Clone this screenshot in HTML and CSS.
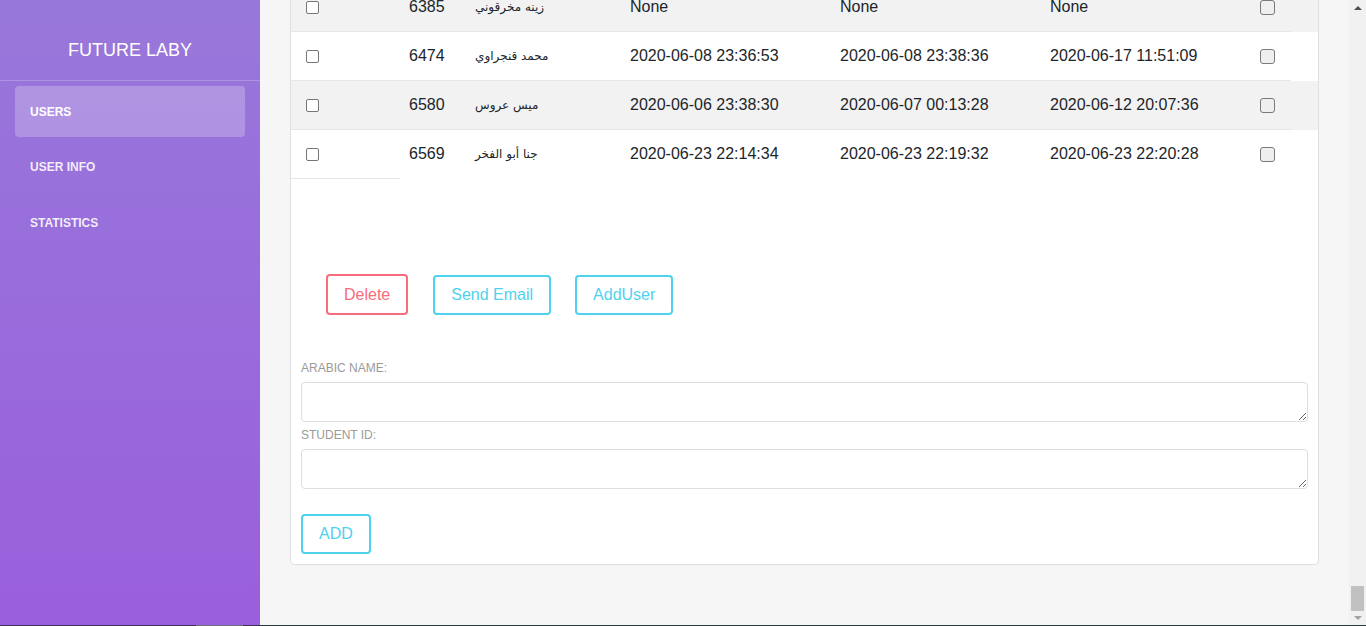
FILE: index.html
```html
<!DOCTYPE html>
<html lang="en">
<head>
<meta charset="utf-8">
<title>Future Laby - Users</title>
<link rel="stylesheet" href="styles.css">
</head>
<body>
<div class="app">
  <aside class="sidebar">
    <div class="brand">FUTURE LABY</div>
    <nav class="nav">
      <a class="nav-item active">USERS</a>
      <a class="nav-item">USER INFO</a>
      <a class="nav-item">STATISTICS</a>
    </nav>
  </aside>
  <main class="main">
    <section class="card">
      <table class="users">
        <colgroup>
          <col class="c-sel"><col class="c-id"><col class="c-name"><col class="c-date"><col class="c-date"><col class="c-date"><col class="c-chk"><col class="c-pad">
        </colgroup>
        <tbody>
          <tr>
            <td class="sel"><span class="box"></span></td>
            <td>6385</td>
            <td class="ar">زينه مخرقوني</td>
            <td>None</td>
            <td>None</td>
            <td>None</td>
            <td><span class="box alt"></span></td>
            <td class="pad"></td>
          </tr>
          <tr>
            <td class="sel"><span class="box"></span></td>
            <td>6474</td>
            <td class="ar">محمد قنجراوي</td>
            <td>2020-06-08 23:36:53</td>
            <td>2020-06-08 23:38:36</td>
            <td>2020-06-17 11:51:09</td>
            <td><span class="box alt"></span></td>
            <td class="pad"></td>
          </tr>
          <tr>
            <td class="sel"><span class="box"></span></td>
            <td>6580</td>
            <td class="ar">ميس عروس</td>
            <td>2020-06-06 23:38:30</td>
            <td>2020-06-07 00:13:28</td>
            <td>2020-06-12 20:07:36</td>
            <td><span class="box alt"></span></td>
            <td class="pad"></td>
          </tr>
          <tr>
            <td class="sel"><span class="box"></span></td>
            <td>6569</td>
            <td class="ar">جنا أبو الفخر</td>
            <td>2020-06-23 22:14:34</td>
            <td>2020-06-23 22:19:32</td>
            <td>2020-06-23 22:20:28</td>
            <td><span class="box alt"></span></td>
            <td class="pad"></td>
          </tr>
          <tr class="tail"><td></td></tr>
        </tbody>
      </table>

      <div class="actions">
        <button class="btn btn-danger">Delete</button>
        <button class="btn btn-info">Send Email</button>
        <button class="btn btn-info">AddUser</button>
      </div>

      <form class="add-form">
        <label class="field-label">Arabic name:</label>
        <textarea class="field"></textarea>
        <label class="field-label">Student ID:</label>
        <textarea class="field"></textarea>
        <button type="button" class="btn btn-info btn-add">ADD</button>
      </form>
    </section>
  </main>
  <div class="scrollbar">
    <span class="arrow up"></span>
    <span class="track"><span class="thumb"></span></span>
    <span class="arrow down"></span>
  </div>
</div>
<div class="taskbar"><span class="seg a"></span><span class="seg b"></span><span class="seg c"></span></div>
</body>
</html>
```

FILE: styles.css
```css
html, body {
  margin: 0;
  padding: 0;
  height: 626px;
  overflow: hidden;
}
body {
  display: flex;
  flex-direction: column;
  font-family: "Liberation Sans", Arial, "DejaVu Sans", sans-serif;
  color: #212529;
}
.app {
  flex: 1;
  display: flex;
  min-height: 0;
}

/* Sidebar */
.sidebar {
  width: 260px;
  flex: none;
  background: linear-gradient(180deg, #9878da 0%, #9a5fdc 100%);
  color: #fff;
}
.brand {
  box-sizing: border-box;
  height: 81px;
  padding-top: 21px;
  display: flex;
  align-items: center;
  justify-content: center;
  font-size: 18px;
  border-bottom: 1px solid rgba(255, 255, 255, 0.22);
}
.nav {
  display: flex;
  flex-direction: column;
  gap: 5px;
  padding: 5px 15px 0;
}
.nav-item {
  height: 50px;
  display: flex;
  align-items: center;
  padding-left: 15px;
  font-size: 12px;
  font-weight: bold;
  color: rgba(255, 255, 255, 0.88);
  border-radius: 4px;
}
.nav-item.active {
  background: rgba(255, 255, 255, 0.23);
  color: #fff;
  height: 51px;
}
.nav-item:last-child { height: 52px; }

/* Main */
.main {
  flex: 1;
  min-width: 0;
  background: #f6f6f6;
  display: flex;
  flex-direction: column;
  justify-content: flex-end;
  overflow: hidden;
  padding: 0 30px 60px;
}
.card {
  flex: none;
  background: #fff;
  border: 1px solid #e0e0e0;
  border-radius: 4px;
  padding-bottom: 10px;
}

/* Table */
.users {
  width: 100%;
  border-collapse: collapse;
  table-layout: fixed;
  font-size: 16px;
}
.c-sel { width: 109px; }
.c-id { width: 66px; }
.c-name { width: 155px; }
.c-date { width: 210px; }
.c-chk { width: 40px; }
.c-pad { width: 27px; }
.users td {
  height: 48px;
  padding: 0 0 0 9px;
  border-top: 1px solid #e6e6e6;
  vertical-align: middle;
  white-space: nowrap;
}
.users td.sel { padding-left: 15px; }
.users td.pad { border-top: none; padding: 0; }
.users tbody tr:nth-child(odd):not(.tail) { background: #f2f2f2; }
.users tr.tail td { height: 0; padding: 0; }
.users td.ar {
  font-family: "DejaVu Sans", sans-serif;
  font-size: 12px;
}
.box {
  display: block;
  width: 11px;
  height: 11px;
  border: 1px solid #767676;
  border-radius: 2px;
  background: #fff;
}
.box.alt {
  width: 13px;
  height: 13px;
  background: #efefef;
  border-color: #7a7a7a;
  border-radius: 3px;
}

/* Buttons */
.actions {
  display: flex;
  gap: 24px;
  padding: 95px 0 0 35px;
}
.btn {
  font-family: "Liberation Sans", Arial, sans-serif;
  font-size: 16px;
  line-height: 18px;
  padding: 9px 16px;
  background: #fff;
  border: 2px solid;
  border-radius: 4px;
}
.btn-danger { color: #f86c7b; border-color: #f86c7b; margin-right: 1px; }
.btn-info { color: #4fd2ee; border-color: #4fd2ee; }
.actions .btn-info { margin-top: 1px; }

/* Form */
.add-form {
  padding: 46px 10px 0;
}
.field-label {
  display: block;
  font-size: 12px;
  line-height: 14px;
  color: #9a9a9a;
  text-transform: uppercase;
  margin: 6px 0 7px;
}
.field-label:first-child { margin-top: 0; }
.field {
  display: block;
  width: 100%;
  height: 40px;
  box-sizing: border-box;
  border: 1px solid #dedede;
  border-radius: 4px;
  margin: 0;
  padding: 6px;
  font-family: inherit;
  resize: vertical;
}
.btn-add {
  display: block;
  margin-top: 25px;
}

/* Fake window scrollbar */
.scrollbar {
  width: 17px;
  flex: none;
  background: #f1f1f1;
  display: flex;
  flex-direction: column;
  align-items: center;
}
.arrow {
  flex: none;
  width: 0;
  height: 0;
  border-left: 4px solid transparent;
  border-right: 4px solid transparent;
}
.arrow.up { border-bottom: 4px solid #505050; margin: 6px 0 7px; }
.arrow.down { border-top: 4px solid #a3a3a3; margin: 5px 0 5px; }
.track {
  flex: 1;
  display: flex;
  flex-direction: column;
  justify-content: flex-end;
  width: 100%;
  align-items: center;
}
.thumb {
  width: 13px;
  height: 25px;
  background: #c1c1c1;
}

.taskbar {
  height: 1px;
  flex: none;
  display: flex;
  background: #2b3a40;
}
.seg.a { width: 196px; background: #3a2f55; }
.seg.b { width: 47px; background: #6b6f7a; }
.seg.c { width: 17px; background: #3a2f55; }
```
